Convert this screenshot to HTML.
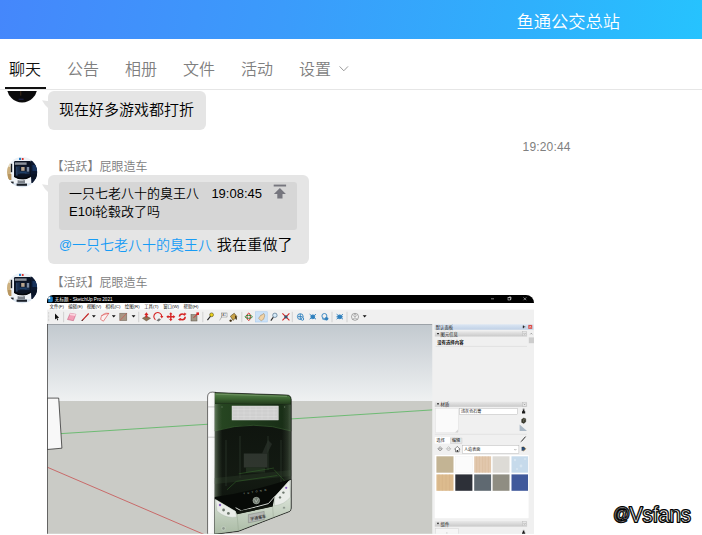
<!DOCTYPE html>
<html lang="zh-CN">
<head>
<meta charset="utf-8">
<title>鱼通公交总站</title>
<style>
html,body{margin:0;padding:0;}
body{width:702px;height:535px;overflow:hidden;background:#fff;position:relative;
  font-family:"Liberation Sans","Noto Sans CJK SC",sans-serif;color:#000;}
.abs{position:absolute;}
#hdr{left:0;top:0;width:702px;height:39px;background:linear-gradient(100deg,#4587fb 0%,#3b9bfb 40%,#2fb0fc 75%,#26c3fe 100%);}
#title{left:516.4px;top:9.5px;font-size:17.3px;line-height:24px;color:#fff;white-space:nowrap;font-weight:350;}
.tab{top:58px;font-size:16px;line-height:24px;color:#7f7f7f;white-space:nowrap;font-weight:350;}
#tabline{left:0;top:89px;width:702px;height:1px;background:#e6e6e6;}
#tabsel{left:5px;top:87px;width:41px;height:2px;background:#111;}
.bubble{background:#e5e5e5;border-radius:6px;}
.nick{font-size:12px;line-height:16px;color:#7d7d7d;white-space:nowrap;font-weight:350;}
.msg{font-size:15px;line-height:20px;white-space:nowrap;font-weight:350;}
.ava{width:30px;height:30px;border-radius:50%;overflow:hidden;}
</style>
</head>
<body>
<svg width="0" height="0" style="position:absolute"><defs>
<clipPath id="avc"><circle cx="15.1" cy="15.1" r="15.1"/></clipPath>
<g id="avatar" clip-path="url(#avc)">
<rect x="0" y="0" width="31" height="31" fill="#edf2f7"/>
<rect x="0" y="9" width="3.6" height="13" fill="#cdb07e"/><rect x="0.4" y="6" width="3" height="4" fill="#e9dcc0"/><rect x="1" y="17" width="3.4" height="6" fill="#b89660"/>
<rect x="23.6" y="3.6" width="8" height="22.4" fill="#0c1830"/><rect x="25.4" y="8" width="4.6" height="6" fill="#17325c"/><rect x="24.4" y="17" width="6" height="5" fill="#0a1426"/>
<rect x="3.8" y="6.8" width="1.4" height="8.4" fill="#15191f"/>
<rect x="7" y="4" width="17" height="22" rx="1.2" fill="#0b1322"/>
<rect x="7.8" y="5.4" width="11.8" height="2.4" fill="#8c929b"/><rect x="8" y="8.6" width="15" height="9" fill="#0e182a"/><rect x="10.8" y="9.2" width="2" height="8" fill="#1a2f4e"/><rect x="17.8" y="14.6" width="4.6" height="2.4" fill="#172b48"/>
<rect x="14.2" y="10" width="3.4" height="3.8" fill="#b8a58e"/><rect x="19.8" y="10" width="2.4" height="4.6" fill="#7d8da4"/><rect x="9.4" y="9.6" width="1" height="9" fill="#3a5a86"/><rect x="12.6" y="14.4" width="7" height="2" fill="#1f4068"/>
<path d="M6.6 19.6 Q15.4 24.6 24 19.6 L24.4 26.8 L6.6 26.8 Z" fill="#f1f4f7"/>
<path d="M7 18.6 Q15.4 23.4 23.8 18.6 L23.8 20 Q15.4 25 7 20 Z" fill="#05070b"/>
<rect x="10.6" y="23.2" width="7.4" height="3.2" fill="#7d838b"/><rect x="11.8" y="22.6" width="4.4" height="1" fill="#cfd4da"/>
<rect x="2" y="26.2" width="27" height="5" fill="#dbe5f0"/><rect x="9.6" y="26.6" width="10.4" height="2.2" fill="#1a1f27"/><rect x="3.6" y="24.6" width="3" height="2" fill="#20252c"/>
<rect x="12" y="0.8" width="2" height="2.2" fill="#2a7fc4"/><rect x="14.8" y="1" width="1.8" height="2" fill="#d8342c"/>
</g></defs></svg>
<div id="hdr" class="abs"></div>
<div id="title" class="abs">鱼通公交总站</div>

<div class="abs tab" style="left:9px;color:#111;">聊天</div>
<div class="abs tab" style="left:67px;">公告</div>
<div class="abs tab" style="left:125px;">相册</div>
<div class="abs tab" style="left:183px;">文件</div>
<div class="abs tab" style="left:241px;">活动</div>
<div class="abs tab" style="left:299px;">设置</div>
<svg class="abs" style="left:338px;top:65px" width="12" height="8" viewBox="0 0 12 8"><path d="M1.6 1.4 L5.8 5.8 L10 1.4" fill="none" stroke="#9a9a9a" stroke-width="1"/></svg>
<div id="tabline" class="abs"></div>
<div id="tabsel" class="abs"></div>

<!-- message 1 -->
<svg class="abs" style="left:6px;top:90.6px" width="33" height="13" viewBox="6 90.6 33 13"><circle cx="22.1" cy="87" r="15.1" fill="#0b0b0c"/><rect x="20.4" y="90.6" width="0.8" height="4.6" fill="#8a5a30" opacity="0.5"/><rect x="18.6" y="98.2" width="5" height="1.4" fill="#2a2f6a" opacity="0.5"/></svg>
<svg class="abs" style="left:41px;top:99px" width="8" height="12" viewBox="0 0 8 12"><path d="M1 1.3 L8 2.2 L8 10 Q3.5 6.5 1 1.3 Z" fill="#e5e5e5"/></svg>
<div class="abs bubble" style="left:48px;top:91px;width:158px;height:39px;"></div>
<div class="abs msg" style="left:59px;top:100px;">现在好多游戏都打折</div>

<div class="abs nick" style="left:522.6px;top:139px;color:#808080;font-weight:400;letter-spacing:0.16px;">19:20:44</div>

<!-- message 2 -->
<svg class="abs" style="left:6.9px;top:156.5px" width="31" height="31" viewBox="0 0 31 31"><use href="#avatar"/></svg>
<div class="abs nick" style="left:51.5px;top:158.5px;">【活跃】屁眼造车</div>
<svg class="abs" style="left:41px;top:183px" width="8" height="12" viewBox="0 0 8 12"><path d="M1 1.3 L8 2.2 L8 10 Q3.5 6.5 1 1.3 Z" fill="#e5e5e5"/></svg>
<div class="abs bubble" style="left:48px;top:175px;width:260.6px;height:88.8px;"></div>
<div class="abs" style="left:59px;top:182px;width:237.8px;height:48.4px;background:#d6d6d6;border-radius:3px;"></div>
<div class="abs" style="left:69px;top:185px;font-size:13px;line-height:18px;white-space:nowrap;font-weight:350;">一只七老八十的臭王八<span style="position:absolute;left:142.4px;top:0">19:08:45</span><br>E10i轮毂改了吗</div>
<svg class="abs" style="left:272px;top:183px" width="16" height="17" viewBox="272 183 16 17"><rect x="273.7" y="184.6" width="12.4" height="1.9" fill="#76767e"/><path d="M279.9 188 L285.9 194 H282.5 V198.6 H277.3 V194 H273.9 Z" fill="#76767e"/></svg>
<div class="abs msg" style="left:59px;top:235px;font-size:14px;color:#189cf5;"><span style="font-size:12.8px;position:relative;top:-0.9px;">@</span>一只七老八十的臭王八</div>
<div class="abs msg" style="left:216.8px;top:234.6px;letter-spacing:0.2px;">我在重做了</div>

<!-- message 3 -->
<svg class="abs" style="left:6.9px;top:272.5px" width="31" height="31" viewBox="0 0 31 31"><use href="#avatar"/></svg>
<div class="abs nick" style="left:51.5px;top:274.5px;">【活跃】屁眼造车</div>

<!--SHOT-START-->
<svg class="abs" style="left:47px;top:295px" width="487" height="240" viewBox="47 295 487 240" font-family="'Liberation Sans','Noto Sans CJK SC',sans-serif">
<defs>
 <clipPath id="rc"><path d="M47 533.8 V301 a6 6 0 0 1 6 -6 H526 a8 8 0 0 1 8 8 V533.8 Z"/></clipPath>
 <clipPath id="vp"><rect x="47" y="324" width="385.5" height="211"/></clipPath>
 <linearGradient id="sky" x1="0" y1="0" x2="0" y2="1"><stop offset="0" stop-color="#c2c9cf"/><stop offset="1" stop-color="#eff1f2"/></linearGradient>
 <linearGradient id="hd" x1="0" y1="0" x2="0" y2="1"><stop offset="0" stop-color="#e9e9e9"/><stop offset="1" stop-color="#c9c9c9"/></linearGradient>
 <linearGradient id="hdb" x1="0" y1="0" x2="0" y2="1"><stop offset="0" stop-color="#dbe6f3"/><stop offset="1" stop-color="#bfd0e6"/></linearGradient>
 <linearGradient id="roof" x1="0" y1="0" x2="0" y2="1"><stop offset="0" stop-color="#5d8450"/><stop offset="0.45" stop-color="#3f6a35"/><stop offset="1" stop-color="#22391c"/></linearGradient>
 <linearGradient id="glass" x1="0" y1="0" x2="0" y2="1"><stop offset="0" stop-color="#0d120d"/><stop offset="0.6" stop-color="#131a12"/><stop offset="1" stop-color="#0a0e0a"/></linearGradient>
 <linearGradient id="bump" x1="0" y1="0" x2="0" y2="1"><stop offset="0" stop-color="#eef3ec"/><stop offset="1" stop-color="#a9baa4"/></linearGradient>
 <linearGradient id="pl" x1="0" y1="0" x2="1" y2="0"><stop offset="0" stop-color="#8fa28a" stop-opacity="0.55"/><stop offset="0.5" stop-color="#5f7259" stop-opacity="0.3"/><stop offset="1" stop-color="#4a5a46" stop-opacity="0"/></linearGradient>
 <linearGradient id="pr" x1="0" y1="0" x2="1" y2="0"><stop offset="0" stop-color="#4a5a46" stop-opacity="0"/><stop offset="0.6" stop-color="#55664f" stop-opacity="0.3"/><stop offset="1" stop-color="#7f937a" stop-opacity="0.5"/></linearGradient>
 <linearGradient id="tint" x1="0" y1="0" x2="1" y2="0"><stop offset="0" stop-color="#284822"/><stop offset="0.5" stop-color="#1f3a1c"/><stop offset="1" stop-color="#172b15"/></linearGradient>
 <linearGradient id="side" x1="0" y1="0" x2="1" y2="0"><stop offset="0" stop-color="#ffffff"/><stop offset="1" stop-color="#f1f1f1"/></linearGradient>
</defs>
<g clip-path="url(#rc)">
<rect x="47" y="295" width="487" height="240" fill="#f0f0f0"/>
<!-- title bar -->
<rect x="47" y="295" width="487" height="8" fill="#000"/>
<path d="M48.2 296.6 h3.6 l1 1 v3.6 l-1 1 h-3.6 z" fill="#1d7fc4"/><path d="M48.2 296.6 h2 v2.4 h-2z" fill="#e9f2fa"/>
<text x="54.8" y="300.8" font-size="4.6" fill="#fff">无标题 - SketchUp Pro 2021</text>
<g stroke="#fff" stroke-width="0.5" fill="none"><path d="M491 298.8 h3"/><rect x="508" y="297.6" width="2.2" height="2.4"/><path d="M509 297.6 v-0.6 h2 v2.4 h-0.8"/><path d="M523.5 297.4 l2.8 2.8 M526.3 297.4 l-2.8 2.8"/></g>
<!-- menu bar -->
<rect x="47" y="303" width="487" height="6.6" fill="#fff"/>
<g font-size="4.4" fill="#111">
<text x="49.6" y="308.3">文件(F)</text><text x="68.2" y="308.3">编辑(E)</text><text x="86.7" y="308.3">视图(V)</text><text x="105.6" y="308.3">相机(C)</text><text x="124.8" y="308.3">绘图(R)</text><text x="144.2" y="308.3">工具(T)</text><text x="163.2" y="308.3">窗口(W)</text><text x="183.6" y="308.3">帮助(H)</text>
</g>
<g>
<path d="M48.7 312 v9.6" stroke="#b0b0b0" stroke-width="0.7" stroke-dasharray="0.7 0.7"/>
<path d="M55 313.5 V319.6 L56.5 318.3 L57.5 320.5 L58.3 320.1 L57.3 318 L59.2 317.8 Z" fill="#111"/>
<g stroke="#bcbcbc" stroke-width="0.6"><path d="M63.6 311.8 v10.4 M138.7 311.8 v10.4 M202.8 311.8 v10.4 M241.8 311.8 v10.4 M292.3 311.8 v10.4 M332 311.8 v10.4 M347 311.8 v10.4"/></g>
<!-- eraser -->
<path d="M70.2 313.3 L75.9 314.3 L73.4 320.7 L67.5 319.5 Z" fill="#f3a0b8" stroke="#b8466a" stroke-width="0.45"/><path d="M70.2 313.3 L75.9 314.3 L75.2 316 L69.5 315 Z" fill="#fbd3de"/>
<!-- pencil -->
<path d="M82 320.6 L88.7 313.5" stroke="#c21f1f" stroke-width="1.1"/><path d="M81.6 321 l1.2 -1.2" stroke="#222" stroke-width="1"/>
<g fill="#111"><path d="M91.9 315.2 h3.9 l-1.95 2.2 z"/><path d="M111.8 315.2 h3.9 l-1.95 2.2 z"/><path d="M131.6 315.2 h3.9 l-1.95 2.2 z"/><path d="M362.7 315.2 h3.9 l-1.95 2.2 z"/></g>
<!-- arc -->
<path d="M100.6 319.4 A6.4 6.4 0 0 1 108.8 313.4 L103.4 321.2 Z" fill="#faf0f0" stroke="#d42020" stroke-width="0.5"/><path d="M101 315.6 L108.8 313.4" stroke="#d42020" stroke-width="0.4"/>
<!-- rectangle -->
<rect x="119.8" y="313.2" width="7" height="7.4" fill="#a89583" stroke="#6b6259" stroke-width="0.5"/><path d="M119.8 320.6 L126.8 313.2" stroke="#d84040" stroke-width="0.5"/>
<!-- push pull -->
<path d="M142.4 318.3 L146.4 320.9 L150.6 318.3 L146.4 316 Z" fill="#8c7355" stroke="#4e3d28" stroke-width="0.4"/><path d="M146.4 312.3 l2.1 2.6 h-1.2 v2.6 h-1.8 v-2.6 h-1.2 z" fill="#d62424"/>
<!-- follow me -->
<path d="M155.4 319.8 A4 4 0 1 1 161.8 316.4" fill="none" stroke="#d62424" stroke-width="1.1"/><path d="M160.2 316 h3.2 l-1.6 2.4 z" fill="#d62424"/><path d="M156.4 320.6 l2.6 -2.4 2 1.2 -2.4 2z" fill="#777"/>
<!-- move -->
<path d="M170.8 312.2 l1.7 2.1 h-1 v1.7 h1.7 v-1 l2.1 1.7 -2.1 1.7 v-1 h-1.7 v1.7 h1 l-1.7 2.1 -1.7 -2.1 h1 v-1.7 h-1.7 v1 l-2.1 -1.7 2.1 -1.7 v1 h1.7 v-1.7 h-1 z" fill="#d62424"/>
<!-- rotate -->
<circle cx="182.3" cy="316.8" r="2.9" fill="none" stroke="#d62424" stroke-width="1.5" stroke-dasharray="7.1 2"/><path d="M184.2 312.6 l2.4 1.4 -2.4 1.6z M180.4 321 l-2.4 -1.4 2.4 -1.6z" fill="#d62424"/>
<!-- scale -->
<rect x="191" y="314.6" width="6" height="6.4" fill="#9f9686" stroke="#5a5246" stroke-width="0.5"/><path d="M193.6 317.8 L198 313.4" stroke="#d62424" stroke-width="0.9"/><rect x="196.4" y="312.4" width="2.6" height="2.6" fill="#d62424"/>
<!-- tape -->
<path d="M207.4 320.2 L210.6 316.2" stroke="#222" stroke-width="1.1"/><circle cx="211.6" cy="314.8" r="1.9" fill="#ecd21c" stroke="#3a3200" stroke-width="0.5"/>
<!-- text -->
<rect x="221.6" y="313" width="5.4" height="4" fill="#fff" stroke="#555" stroke-width="0.4"/><text x="222.3" y="316.2" font-size="2.8" fill="#333">A1</text><path d="M221.6 317 L219.6 320.4" stroke="#555" stroke-width="0.4"/>
<!-- bucket -->
<path d="M230.4 316.2 L234.2 313.2 L237 316.6 L233 320.4 Z" fill="#c8a248" stroke="#3c2c10" stroke-width="0.5"/><path d="M235 315.4 q2.6 1 1.6 4.6 q-1.6 -0.6 -1.6 -4.6z" fill="#3c2c10"/><path d="M230.6 319.4 a1.2 1.2 0 1 0 0.1 0z" fill="#3c2c10"/>
<!-- orbit -->
<ellipse cx="248.7" cy="316.8" rx="1.7" ry="3.6" fill="none" stroke="#d62424" stroke-width="1"/><ellipse cx="248.7" cy="316.8" rx="3.6" ry="1.5" fill="none" stroke="#2f8c3a" stroke-width="1"/>
<!-- pan -->
<rect x="255.6" y="311.8" width="11.6" height="10.2" fill="#cde2f7" stroke="#9cc6ee" stroke-width="0.5"/><path d="M258.6 318.4 l2.4 -3.6 1 0.4 1.4 -1.8 1 0.6 -0.4 1 0.8 0.6 -1.2 3.6 -2.4 1.6 z" fill="#f1d3a6" stroke="#8b6a3e" stroke-width="0.4"/>
<!-- zoom -->
<path d="M270.8 320.6 L273.4 317.2" stroke="#2a2a2a" stroke-width="1.1"/><circle cx="274.9" cy="315.3" r="2.2" fill="#d7ebf8" stroke="#3b5a78" stroke-width="0.6"/>
<!-- zoom extents -->
<path d="M282.4 313.4 L289.4 320.4 M289.4 313.4 L282.4 320.4" stroke="#d62424" stroke-width="1.1"/><circle cx="285.9" cy="316.9" r="1.7" fill="#38536e"/>
<!-- blue icons -->
<g fill="none" stroke="#2f80bd" stroke-width="0.9"><circle cx="300.3" cy="316.6" r="2.9"/><path d="M298 316.6 h4.6 M300.3 314 v5.4"/><circle cx="302.4" cy="319" r="1.3" fill="#e8f2fa"/>
<path d="M309.6 314.2 l6.4 5 M316 314.2 l-6.4 5"/><circle cx="312.8" cy="316.8" r="1.9" fill="#2f80bd"/>
<circle cx="324.4" cy="316" r="2.5"/><path d="M322 318.6 q3 2.6 6.2 -0.2"/><circle cx="326.6" cy="318.8" r="1.3" fill="#2f80bd"/>
<path d="M336.6 314.2 l6.4 5 M343 314.2 l-6.4 5"/><circle cx="339.7" cy="316.8" r="1.9" fill="#2f80bd"/><path d="M336.4 316.8 h6.6"/></g>
<!-- user -->
<circle cx="355" cy="316.8" r="3.5" fill="#f6f6f6" stroke="#6a6a6a" stroke-width="0.6"/><circle cx="355" cy="315.7" r="1.2" fill="none" stroke="#6a6a6a" stroke-width="0.5"/><path d="M352.8 319.2 q2.2 -2.6 4.4 0" fill="none" stroke="#6a6a6a" stroke-width="0.5"/>
</g>

<g clip-path="url(#vp)">
<rect x="47" y="324" width="386" height="77.4" fill="url(#sky)"/>
<rect x="47" y="401" width="386" height="134" fill="#cacbc6"/>
<path d="M47 324.3 H432.5" stroke="#8d9399" stroke-width="0.9"/>
<path d="M55 434 L432.5 409.9" stroke="#63b96a" stroke-width="0.9"/>
<path d="M47.5 467.3 L206 535.3" stroke="#c85252" stroke-width="0.8"/>
<path d="M47 398.1 H58.7 L61.9 448.2 L47 449.5 Z" fill="#f8f8f8" stroke="#1c1c1c" stroke-width="0.7"/>
<path d="M47.4 324 V535" stroke="#4a4a4a" stroke-width="0.9"/>
<!-- BUS -->
<g>
<path d="M207.6 536 V397 Q207.6 392.1 212.4 392.1 L216 392.4 L215 536 Z" fill="url(#side)" stroke="#151515" stroke-width="0.6"/>
<path d="M207.6 406.9 H215 M207.6 437.2 H215" stroke="#8a8a8a" stroke-width="0.4"/>
<path d="M214.8 392.6 L287 395 Q291 395.3 291.2 399.6 L291.2 508 Q291.2 510.8 289.4 511.6 L273.4 517.7 L238.5 531.3 L214.6 534.4 Z" fill="url(#glass)"/>
<!-- roof band -->
<path d="M214.8 392.6 L287 395 Q291 395.3 291.2 399.6 L291.2 404.4 L214.8 403.6 Z" fill="url(#roof)"/>
<path d="M216 394.2 L287 396.4" stroke="#7fa372" stroke-width="0.8" opacity="0.7"/>
<!-- green tinted upper -->
<path d="M214.8 403.6 L291.2 404.4 V431 Q254 419.5 214.8 431 Z" fill="url(#tint)"/>
<path d="M214.8 431 Q254 419.5 291.2 431" fill="none" stroke="#3f6a36" stroke-width="0.7" opacity="0.8"/>
<!-- destination display -->
<rect x="232" y="406" width="46.3" height="14" fill="#cfcfcf" stroke="#e9e9e9" stroke-width="0.45"/>
<g stroke="#e9e9e9" stroke-width="0.3" opacity="0.9"><path d="M233 409.5 h44.3 M233 413 h44.3 M233 416.5 h44.3"/><path d="M238 406.5 v13 M244 406.5 v13 M250 406.5 v13 M256 406.5 v13 M262 406.5 v13 M268 406.5 v13 M274 406.5 v13"/></g>
<circle cx="222" cy="407" r="0.7" fill="#60785a"/><circle cx="284.6" cy="407" r="0.7" fill="#60785a"/>
<!-- interior -->
<path d="M243.8 453.6 H267.3 V467.4 H243.8 Z" fill="#434943" opacity="0.6"/><path d="M246 467.4 h19 v5 h-19z" fill="#2a3a26" opacity="0.7"/><path d="M268 440 L262 453.6 H267.3 L272 444 Z" fill="#333a33" opacity="0.55"/>
<path d="M226 440 V486 M240 436 V478 M268 436 V470 M281 440 V482" stroke="#2a352a" stroke-width="1.4" opacity="0.6"/>
<path d="M214.8 478 L291.2 470 V476 L214.8 484 Z" fill="#2a3a28" opacity="0.45"/>
<rect x="214.8" y="404" width="7.5" height="94" fill="url(#pl)"/><rect x="282" y="404.4" width="9.2" height="78" fill="url(#pr)"/>
<!-- wipers -->
<g fill="none" stroke="#356a2c" stroke-width="0.6" opacity="0.85"><path d="M227 489.8 L236.2 481.4 L277.4 475.5"/><path d="M274 469.6 L287.5 484"/><path d="M238.7 473.8 L274 468"/></g>
<!-- fascia -->
<path d="M214.8 497 Q250 492 291.2 479 V508 Q291.2 510.8 289.4 511.6 L273.4 517.7 L238.5 531.3 L214.6 534.4 Z" fill="#070a07"/>
<!-- bumper -->
<path d="M214.8 499 L235.6 511.3 L237 514 L272.6 506.3 L274.8 496.4 L288.6 481 L291.2 479.6 V508 Q291.2 510.8 289.4 511.6 L273.4 517.7 L238.5 531.3 L214.6 534.4 Z" fill="url(#bump)"/>
<path d="M237 514 L238.5 531.3 M272.6 506.3 L273.4 517.7" stroke="#8fa08a" stroke-width="0.4"/>
<!-- headlights -->
<path d="M215.7 499.4 L235.6 511.3 L236.6 517 Q226 519 217 511 Z" fill="#e9ece8" stroke="#9aa59a" stroke-width="0.3"/>
<path d="M274.8 496.4 L289.6 480.6 L290.6 497 Q284 505 274.4 505.6 Z" fill="#e9ece8" stroke="#9aa59a" stroke-width="0.3"/>
<circle cx="220" cy="505" r="1.2" fill="#8a5fc0"/><circle cx="223.6" cy="510" r="1.4" fill="#6d776d"/><circle cx="228.4" cy="513.4" r="1.4" fill="#6d776d"/>
<circle cx="286.2" cy="487.8" r="1.1" fill="#8a5fc0"/><circle cx="283.4" cy="492.6" r="1.2" fill="#6d776d"/><circle cx="280" cy="497.4" r="1.2" fill="#6d776d"/>
<circle cx="223.5" cy="528.4" r="1.8" fill="#8f9b8f" stroke="#dfe6dd" stroke-width="0.5"/><circle cx="284" cy="507.7" r="1.5" fill="#8f9b8f" stroke="#dfe6dd" stroke-width="0.5"/>
<!-- chrome strip -->
<path d="M235.6 507.7 L241.3 510.8 L268.4 503.6 L274.8 496.4" fill="none" stroke="#e8ece6" stroke-width="0.9"/>
<path d="M236.4 511.6 L272.6 504.4 L272.8 506.6 L237 514.2 Z" fill="#11160f"/>
<!-- logo -->
<circle cx="256.3" cy="500.6" r="3.3" fill="#6f7a6f" stroke="#b9c2b8" stroke-width="0.6"/><path d="M254.6 499 l1.7 3.4 1.7 -3.4" fill="none" stroke="#dfe5de" stroke-width="0.5"/>
<text transform="translate(243.4 494.6) rotate(-9.7)" font-size="2.6" letter-spacing="2.45" fill="#b9c0b8">YUTONG</text>
<!-- plate -->
<path d="M248.4 514.6 L264.2 511.4 L264.2 519.6 L248.4 522.8 Z" fill="#b4b7b4" stroke="#6e726e" stroke-width="0.4"/>
<text transform="translate(250.6 520.6) rotate(-11.4)" font-size="4" fill="#444" font-weight="bold">宇通客车</text>
<path d="M214.8 392.6 L287 395 Q291 395.3 291.2 399.6 L291.2 508 Q291.2 510.8 289.4 511.6 L273.4 517.7 L238.5 531.3 L214.6 534.4" fill="none" stroke="#0a0a0a" stroke-width="0.6"/>
</g>
</g>

<g>
<rect x="432.5" y="324" width="102" height="211" fill="#f0f0f0"/>
<!-- default tray header -->
<rect x="434.6" y="324.3" width="99" height="5.4" fill="url(#hdb)"/>
<text x="435.8" y="328.7" font-size="4.3" fill="#1a1a1a">默认面板</text>
<path d="M523 325.6 l1.6 1.2 -1.6 1.4z M524.6 326.8 h1" stroke="#222" stroke-width="0.4" fill="#222"/>
<rect x="528.3" y="324.9" width="3.9" height="3.9" fill="#da4a44"/><path d="M529.3 325.9 l1.9 1.9 M531.2 325.9 l-1.9 1.9" stroke="#fff" stroke-width="0.5"/>
<!-- entity info header -->
<rect x="434.8" y="331.2" width="92.3" height="5.3" fill="url(#hd)"/>
<path d="M436.8 332.9 h2.4 l-1.2 1.8z" fill="#111"/><text x="440.6" y="335.6" font-size="4.3" fill="#1a1a1a">图元信息</text>
<rect x="522.8" y="331.8" width="3.6" height="4" fill="#e4e4e4" stroke="#aaa" stroke-width="0.3"/><path d="M523.8 333.4 l0.8 0.9 0.8 -0.9" stroke="#333" stroke-width="0.35" fill="none"/>
<!-- scrollbar -->
<path d="M530.3 334.4 l1 -1.2 1 1.2" stroke="#555" stroke-width="0.45" fill="none"/>
<rect x="528.8" y="337.4" width="5.2" height="5.8" fill="#cdcdcd"/>
<text x="437.2" y="343.7" font-size="4.4" font-weight="bold" fill="#111">没有选择内容</text>
<path d="M435.7 346.4 H527" stroke="#d2d2d2" stroke-width="0.5"/>
<!-- materials header -->
<rect x="434.8" y="401.6" width="92.3" height="5.2" fill="url(#hd)"/>
<path d="M436.8 403.2 h2.4 l-1.2 1.8z" fill="#111"/><text x="440.6" y="405.9" font-size="4.3" fill="#1a1a1a">材质</text>
<rect x="522.8" y="402.2" width="3.6" height="4" fill="#e4e4e4" stroke="#aaa" stroke-width="0.3"/><path d="M523.8 403.8 l0.8 0.9 0.8 -0.9" stroke="#333" stroke-width="0.35" fill="none"/>
<rect x="435.7" y="408.4" width="22.5" height="24.4" fill="#fafafa" stroke="#dcdcdc" stroke-width="0.4"/><path d="M458 429.6 v3 h-3z" fill="#d5d5d5"/>
<rect x="459.4" y="408.4" width="58.2" height="6.2" fill="#fff" stroke="#a9a9a9" stroke-width="0.4"/>
<text x="461" y="413.2" font-size="4.1" fill="#222">浅灰色石膏</text>
<path d="M522 413.6 h3.2 v-2.4 h-0.8 v-1.6 h-1.6 v1.6 h-0.8z" fill="#1a1a1a"/><path d="M522.8 409 h1.6" stroke="#1a1a1a" stroke-width="0.5"/>
<path d="M521.6 419.4 l2 -1.4 2.2 0.8 v3 l-2 1.6 -2.2 -1z" fill="#3a3a2a" stroke="#111" stroke-width="0.3"/><path d="M523.6 422 v-2.4 l2.2 -0.8" stroke="#bbb" stroke-width="0.3" fill="none"/>
<path d="M519.6 424.6 L527 431 H519.6 Z" fill="#a9b7c4"/>
<path d="M434.8 434.3 H527" stroke="#d4d4d4" stroke-width="0.5"/>
<!-- tabs -->
<rect x="434.8" y="437" width="15.2" height="6.6" fill="#fff"/>
<text x="436.6" y="441.9" font-size="4.1" fill="#111">选择</text>
<rect x="450.6" y="438" width="11.4" height="5.4" fill="#e6e6e6" stroke="#b5b5b5" stroke-width="0.3"/>
<text x="452" y="442.4" font-size="4.1" fill="#111">编辑</text>
<path d="M521.2 441.6 L525.6 436.6" stroke="#2a2a2a" stroke-width="1"/><path d="M520.6 442.4 l1.2 -1.2" stroke="#999" stroke-width="0.6"/>
<!-- nav row -->
<g fill="none" stroke="#333" stroke-width="0.45"><path d="M440.1 446.6 l2.2 2.2 -2.2 2.2 -2.2 -2.2z M438.6 448.8 h3"/><path d="M448.6 446.6 l2.2 2.2 -2.2 2.2 -2.2 -2.2z M447.2 448.8 h3" stroke="#888"/></g>
<path d="M454.6 449.2 l2.7 -2.8 2.7 2.8 h-0.9 v2.6 h-3.6 v-2.6z" fill="#fff" stroke="#222" stroke-width="0.5"/><rect x="456.7" y="450" width="1.2" height="1.8" fill="#222"/>
<rect x="462.3" y="445.5" width="56.6" height="8.1" fill="#fff" stroke="#a9a9a9" stroke-width="0.4"/>
<text x="464" y="451.2" font-size="4.1" fill="#222">人造表面</text>
<path d="M514.2 449 l1.1 1.2 1.1 -1.2" stroke="#555" stroke-width="0.4" fill="none"/>
<path d="M521.8 447 h2.2 l1.6 1.8 -1.6 1.8 h-2.2z" fill="#2b4f7a" stroke="#1a1a1a" stroke-width="0.3"/><path d="M523.4 446.2 l2.6 2.6 -2.6 2.6" stroke="#d08a20" stroke-width="0.4" fill="none"/>
<!-- swatches -->
<rect x="434.8" y="455" width="93.8" height="63.2" fill="#fff"/>
<g>
<rect x="436.4" y="456.3" width="17.1" height="16.4" fill="#c3b494"/>
<rect x="455.3" y="456.3" width="17.1" height="16.4" fill="#fbfbfb" stroke="#ececec" stroke-width="0.3"/>
<rect x="474.2" y="456.3" width="16.9" height="16.4" fill="#e2c8ad"/>
<rect x="492.6" y="456.3" width="16.9" height="16.4" fill="#dddbd6"/>
<rect x="511.5" y="456.3" width="16.5" height="16.4" fill="#c6daeb"/>
<rect x="436.4" y="474.4" width="17.1" height="16.4" fill="#dcbb8e"/>
<rect x="455.3" y="474.4" width="17.1" height="16.4" fill="#2d3038"/>
<rect x="474.2" y="474.4" width="16.9" height="16.4" fill="#5f6971"/>
<rect x="492.6" y="474.4" width="16.9" height="16.4" fill="#8f8d82"/>
<rect x="511.5" y="474.4" width="16.5" height="16.4" fill="#40599b"/>
<g stroke="#d4b696" stroke-width="0.5" opacity="0.8"><path d="M476.6 456.3 v16.4 M479.4 456.3 v16.4 M482.6 456.3 v16.4 M485.2 456.3 v16.4 M488.4 456.3 v16.4"/></g>
<g stroke="#d0ad7e" stroke-width="0.5" opacity="0.7"><path d="M439 474.4 v16.4 M442.4 474.4 v16.4 M446 474.4 v16.4 M449.6 474.4 v16.4"/></g>
<g fill="#dbe8f3" opacity="0.8"><circle cx="515" cy="460" r="1.2"/><circle cx="521" cy="466" r="1.4"/><circle cx="525" cy="459" r="1"/><circle cx="517" cy="469" r="1.1"/></g>
</g>
<!-- components header -->
<rect x="434.8" y="521" width="92.3" height="5.6" fill="url(#hd)"/>
<path d="M436.8 522.8 h2.4 l-1.2 1.8z" fill="#111"/><text x="440.6" y="525.6" font-size="4.3" fill="#1a1a1a">组件</text>
<rect x="522.8" y="521.8" width="3.6" height="4" fill="#e4e4e4" stroke="#aaa" stroke-width="0.3"/><path d="M523.8 523.4 l0.8 0.9 0.8 -0.9" stroke="#333" stroke-width="0.35" fill="none"/>
<rect x="435.7" y="528.8" width="22.5" height="10" fill="#f6f6f6" stroke="#cfcfcf" stroke-width="0.4"/>
<path d="M446 533 h1.6" stroke="#888" stroke-width="0.4"/>
<path d="M522 535 h3.2 v-2.4 h-0.8 v-1.6 h-1.6 v1.6 h-0.8z" fill="#1a1a1a"/><path d="M522.8 530.4 h1.6" stroke="#1a1a1a" stroke-width="0.5"/>
</g>

</g>
</svg>
<!--SHOT-END-->
<svg class="abs" id="wm" style="left:605px;top:498px" width="97" height="37" viewBox="605 498 97 37"><g transform="translate(0 521.9) scale(1 1.07)" font-family="'Liberation Sans',sans-serif" font-size="20.2" stroke-linejoin="round"><text x="613.2" y="0" fill="#000" stroke="#000" stroke-width="1.9"><tspan font-size="16.6" dy="-1.6">@</tspan><tspan dy="1.6" dx="-0.9">Vsfans</tspan></text><text x="613.2" y="0" fill="#fff" stroke="#000" stroke-width="0.7"><tspan font-size="16.6" dy="-1.6">@</tspan><tspan dy="1.6" dx="-0.9">Vsfans</tspan></text></g></svg>
</body>
</html>
